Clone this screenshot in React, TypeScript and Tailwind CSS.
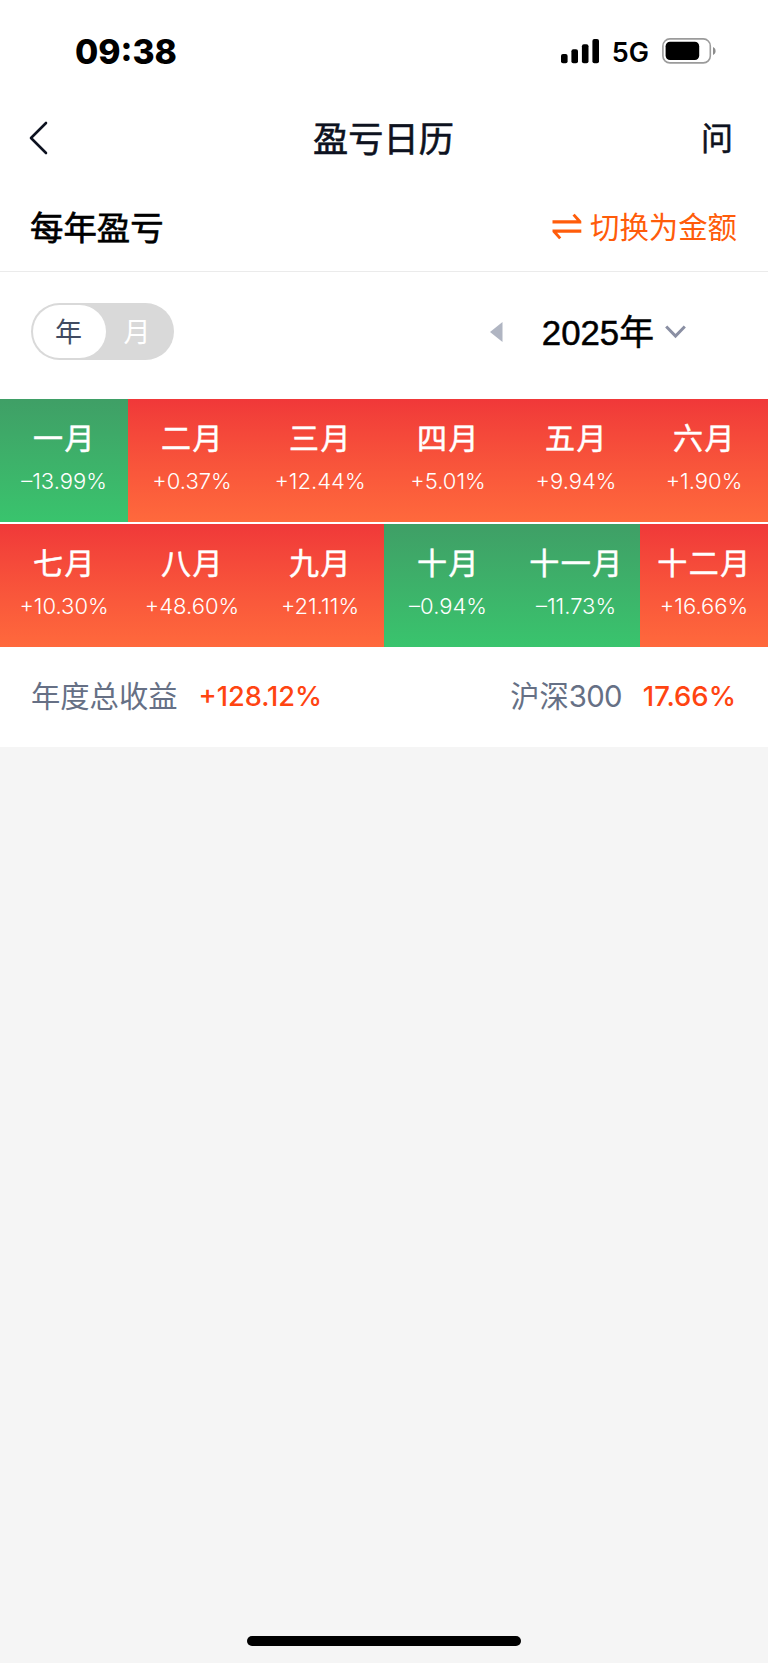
import clsx from "clsx";
import React from "react";

type Month = {
  name: string;
  value: string;
};

const months: Month[] = [
  { name: "一月", value: "–13.99%" },
  { name: "二月", value: "+0.37%" },
  { name: "三月", value: "+12.44%" },
  { name: "四月", value: "+5.01%" },
  { name: "五月", value: "+9.94%" },
  { name: "六月", value: "+1.90%" },
  { name: "七月", value: "+10.30%" },
  { name: "八月", value: "+48.60%" },
  { name: "九月", value: "+21.11%" },
  { name: "十月", value: "–0.94%" },
  { name: "十一月", value: "–11.73%" },
  { name: "十二月", value: "+16.66%" },
];

const StatusBar = () => {
  return (
    <div className="flex h-[102px] items-center justify-between pl-[75px] pr-[52px]">
      <span className="mt-[2px] text-[33.7px] font-extrabold leading-none text-black">09:38</span>
      <div className="flex items-center">
        <svg width="39" height="25" viewBox="0 0 39 25" fill="#000">
          <rect x="0" y="15" width="6.6" height="9.2" rx="2" />
          <rect x="10.4" y="10.3" width="6.6" height="13.9" rx="2" />
          <rect x="20.9" y="5.2" width="6.6" height="19" rx="2" />
          <rect x="31.4" y="0" width="6.6" height="24.2" rx="2" />
        </svg>
        <span className="ml-[12px] mt-[3px] text-[27px] font-semibold leading-none text-black">5G</span>
        <svg className="ml-[13px]" width="54" height="26" viewBox="0 0 54 26" fill="none">
          <rect x="0.9" y="0.9" width="47.4" height="24" rx="7" stroke="#9b9b9b" strokeWidth="1.6" />
          <rect x="3.6" y="3.8" width="33.6" height="18.2" rx="4.4" fill="#000" />
          <path d="M51 9v8c1.6-.7 2.6-2.2 2.6-4s-1-3.3-2.6-4z" fill="#8c8c8c" />
        </svg>
      </div>
    </div>
  );
};

const NavBar = () => {
  return (
    <div className="flex h-[72px] items-center justify-between pl-[29px] pr-[35px] text-[#0d1220]">
      <svg width="32" height="34" viewBox="0 0 32 34" fill="none">
        <path
          d="M17 2L2 17l15 15"
          stroke="currentColor"
          strokeWidth="2.6"
          strokeLinecap="round"
          strokeLinejoin="round"
        />
      </svg>
      <h1 className="ml-[5px] mt-[3px] text-[35.2px] leading-none [-webkit-text-stroke:0.6px]">盈亏日历</h1>
      <span className="mt-[2px] text-[32px] leading-none [-webkit-text-stroke:0.5px]">问</span>
    </div>
  );
};

const SectionHeader = () => {
  return (
    <div className="flex h-[98px] items-center justify-between border-b border-[#ebebeb] pl-[30px] pr-[31px] pt-[11px]">
      <h2 className="mt-[2px] text-[33.4px] leading-none text-black [-webkit-text-stroke:0.7px]">每年盈亏</h2>
      <button className="flex items-center text-[#ff5c0a]">
        <svg className="-mt-[3px]" width="30" height="27" viewBox="0 0 29 27" fill="currentColor">
          <path d="M0 7.200h24.200L20 2.600 22.200.8l6.600 7.200v2.500H0z" />
          <path d="M28.800 19.800H4.600l4.200 4.600-2.200 1.800L0 19v-2.500h28.800z" />
        </svg>
        <span className="ml-[8px] text-[29.4px] leading-none">切换为金额</span>
      </button>
    </div>
  );
};

const PeriodPicker = () => {
  return (
    <div className="flex h-[126px] items-center justify-between pl-[31px] pr-[82px] pb-[7px]">
      <div className="flex h-[57px] w-[143px] rounded-full bg-[#d9d9d9] p-[2px] text-[27px] leading-none">
        <div className="flex w-[73px] items-center justify-center rounded-full bg-white pr-[2px] pt-[1px] text-[#414b61]">
          年
        </div>
        <div className="flex flex-1 items-center justify-center pr-[4px] pt-[1px] text-white">月</div>
      </div>
      <div className="flex items-center pt-[1px]">
        <svg width="13" height="20" viewBox="0 0 13 20">
          <path d="M0 10L12.500 0v20z" fill="#b0b5c2" />
        </svg>
        <span className="ml-[39px] mt-[2px] font-['Liberation_Sans','Noto_Sans_CJK_SC',sans-serif] text-[34.8px] leading-none text-black [-webkit-text-stroke:0.5px]">
          2025年
        </span>
        <svg className="ml-[11px]" width="21" height="14" viewBox="0 0 21 14" fill="none">
          <path d="M1.200 1.500l9.300 9.500 9.300-9.500" stroke="#8a8fa3" strokeWidth="3" />
        </svg>
      </div>
    </div>
  );
};

const MonthCell = ({ name, value }: Month) => {
  const down = value.startsWith("–");

  return (
    <div
      className={clsx(
        "flex h-[123px] flex-col items-center bg-linear-to-b pt-[22px] text-white",
        down ? "from-[#3f9f66] to-[#39c46d]" : "from-[#f03839] to-[#ff693c]"
      )}
    >
      <span className="pl-[1px] text-[30px] leading-[34px] tracking-[1.5px] [-webkit-text-stroke:0.5px]">{name}</span>
      <span className="mt-[13px] text-[22px] font-light leading-[26px]">{value}</span>
    </div>
  );
};

const Summary = () => {
  return (
    <div className="flex h-[100px] items-center justify-between pl-[31px] pr-[32px] text-[29.3px] leading-none text-[#667085]">
      <div className="flex items-center">
        <span>年度总收益</span>
        <span className="ml-[21px] text-[27.2px] font-medium text-[#ff4411]">+128.12%</span>
      </div>
      <div className="flex items-center">
        <span>
          沪深<span className="tracking-[-0.7px]">300</span>
        </span>
        <span className="ml-[21px] text-[27.5px] font-medium text-[#ff4411]">17.66%</span>
      </div>
    </div>
  );
};

const App = () => {
  return (
    <div className="flex h-[1663px] w-[768px] flex-col bg-[#f5f5f5] font-['Inter','Noto_Sans_CJK_SC',sans-serif]">
      <div className="bg-white">
        <StatusBar />
        <NavBar />
        <SectionHeader />
        <PeriodPicker />
        <div className="grid grid-cols-6 gap-y-[2px] pt-[0.5px]">
          {months.map((month) => (
            <MonthCell key={month.name} {...month} />
          ))}
        </div>
        <Summary />
      </div>
      <div className="mx-auto mb-[17px] mt-auto h-[10px] w-[274px] rounded-full bg-black" />
    </div>
  );
};

export default App;
